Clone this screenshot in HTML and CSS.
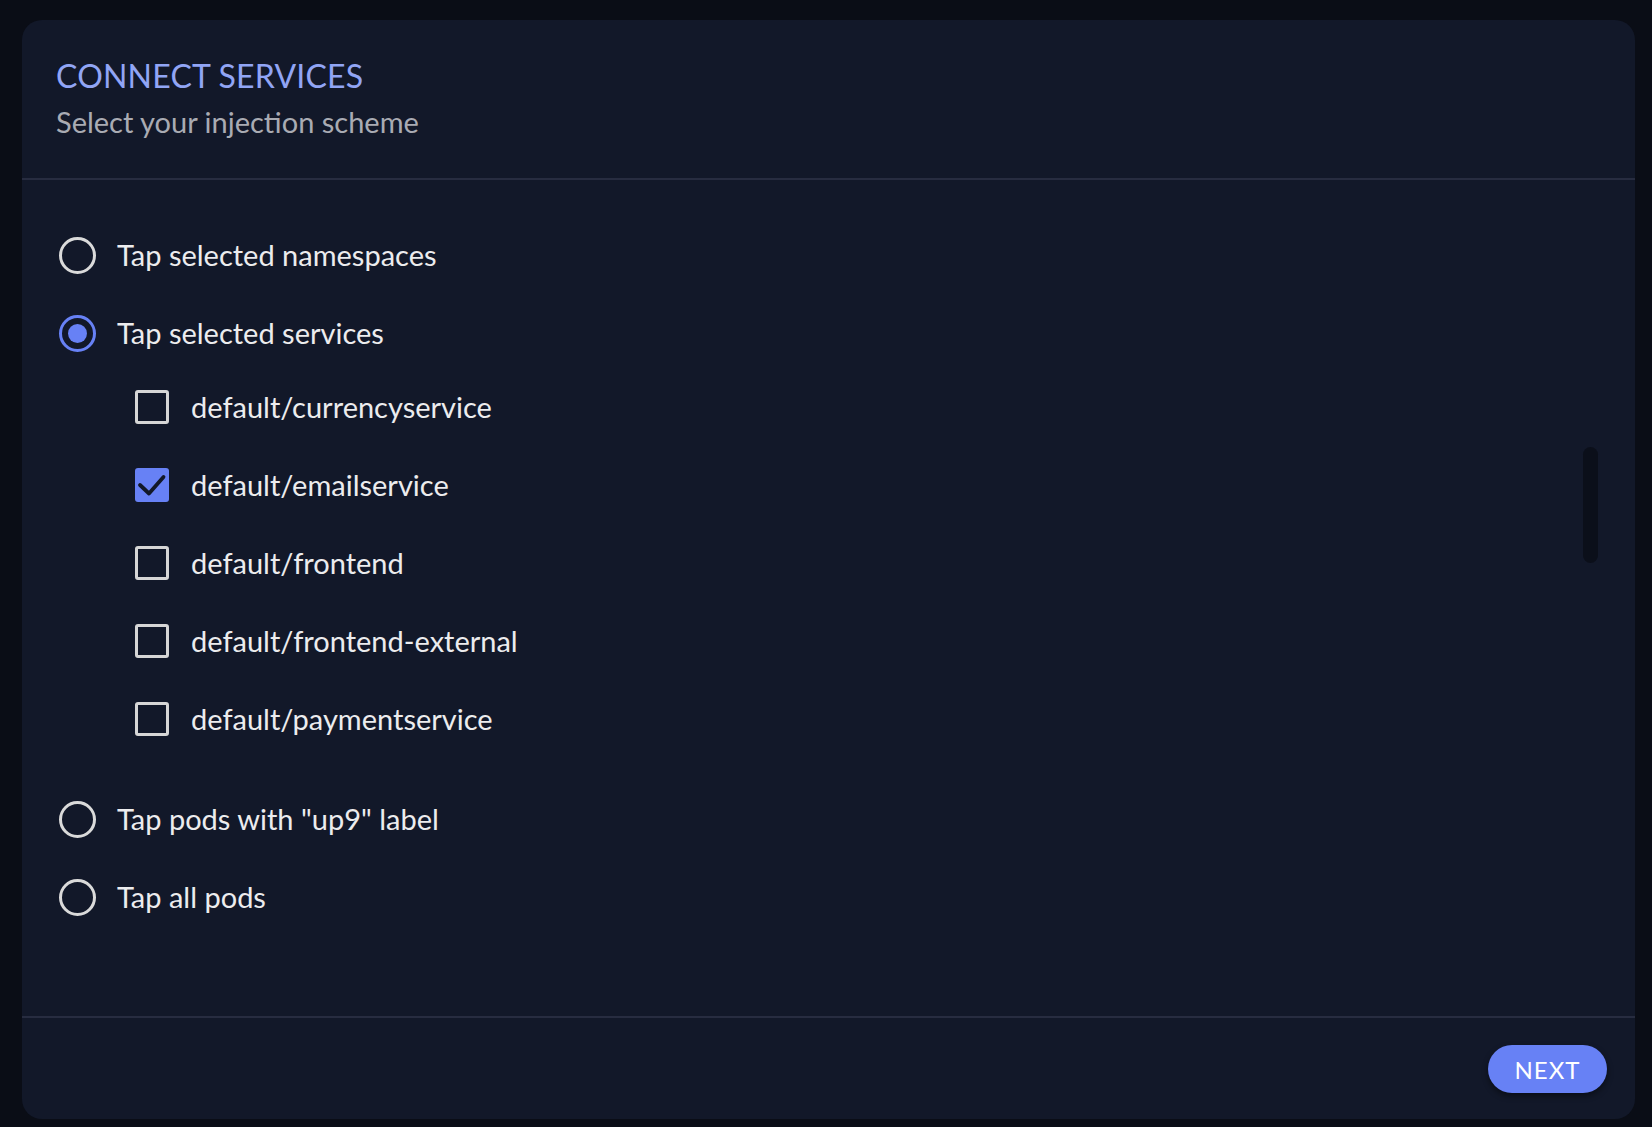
FILE: index.html
```html
<!DOCTYPE html>
<html lang="en">
<head>
<meta charset="utf-8">
<title>Connect Services</title>
<link rel="stylesheet" href="styles.css">
</head>
<body>
<div class="card">
  <header class="card-header">
    <h1 class="title">CONNECT SERVICES</h1>
    <p class="subtitle">Select your injection scheme</p>
  </header>
  <main class="card-body">
    <div class="option"><span class="radio"></span><span class="label">Tap selected namespaces</span></div>
    <div class="option"><span class="radio checked"></span><span class="label">Tap selected services</span></div>
    <div class="services">
      <div class="service"><span class="checkbox"></span><span class="label">default/currencyservice</span></div>
      <div class="service"><span class="checkbox checked"><svg viewBox="0 0 34 34" width="34" height="34"><path d="M5 17l9 8.5L28.5 9" fill="none" stroke="#121829" stroke-width="3.8" stroke-linecap="round" stroke-linejoin="round"/></svg></span><span class="label">default/emailservice</span></div>
      <div class="service"><span class="checkbox"></span><span class="label">default/frontend</span></div>
      <div class="service"><span class="checkbox"></span><span class="label">default/frontend-external</span></div>
      <div class="service"><span class="checkbox"></span><span class="label">default/paymentservice</span></div>
    </div>
    <div class="option"><span class="radio"></span><span class="label">Tap pods with "up9" label</span></div>
    <div class="option"><span class="radio"></span><span class="label">Tap all pods</span></div>
    <div class="scrollbar"></div>
  </main>
  <footer class="card-footer">
    <button class="next">NEXT</button>
  </footer>
</div>
</body>
</html>
```
FILE: styles.css
```css
* { box-sizing: border-box; }
html, body { margin: 0; padding: 0; }
body {
  background: #0a0d16;
  font-family: Lato, "Noto Sans", sans-serif;
  color: #ececee;
  width: 1652px;
  height: 1127px;
  overflow: hidden;
}
.card {
  margin: 20px 17px 0 22px;
  height: 1099px;
  background: #121829;
  border-radius: 20px;
  display: flex;
  flex-direction: column;
}
.card-header {
  height: 160px;
  padding: 36px 34px 0 34px;
  border-bottom: 2px solid #272c40;
}
.title {
  margin: 0;
  font-weight: 400;
  font-size: 32px;
  line-height: 40px;
  color: #91a5f5;
  letter-spacing: 0.2px;
}
.subtitle {
  margin: 8px 0 0 0;
  font-size: 29px;
  line-height: 36px;
  color: #a9abb3;
}
.card-body {
  flex: 1;
  position: relative;
  padding: 36px 34px 0 35px;
}
.option {
  display: flex;
  align-items: center;
  height: 78px;
}
.label {
  font-size: 29px;
  line-height: 36px;
}
.radio {
  width: 37px;
  height: 37px;
  border: 3.4px solid #dadada;
  border-radius: 50%;
  margin-left: 2px;
  margin-right: 21px;
  flex: none;
  position: relative;
}
.radio.checked { border-color: #6781f5; }
.radio.checked::after {
  content: "";
  position: absolute;
  left: 50%;
  top: 50%;
  width: 19px;
  height: 19px;
  margin: -9.5px 0 0 -9.5px;
  border-radius: 50%;
  background: #6781f5;
}
.services {
  margin: -4px 0 22px 0;
}
.service {
  display: flex;
  align-items: center;
  height: 78px;
  padding-left: 78px;
}
.checkbox {
  width: 34px;
  height: 34px;
  border: 3.2px solid #d6d6d6;
  border-radius: 3px;
  margin-right: 22px;
  flex: none;
  display: flex;
  align-items: center;
  justify-content: center;
  position: relative;
}
.checkbox.checked {
  background: #6781f5;
  border: none;
}
.scrollbar {
  position: absolute;
  right: 37px;
  top: 267px;
  width: 15px;
  height: 116px;
  border-radius: 8px;
  background: #0b0f1a;
}
.card-footer {
  height: 103px;
  border-top: 2px solid #272c40;
  display: flex;
  justify-content: flex-end;
  align-items: flex-start;
  padding: 27px 28px 0 0;
}
.next {
  width: 119px;
  height: 48px;
  border: none;
  border-radius: 24px;
  background: #6781f5;
  color: #ffffff;
  font-family: Lato, "Noto Sans", sans-serif;
  font-weight: 400;
  font-size: 24px;
  letter-spacing: 1px;
  box-shadow: 0 3px 6px rgba(0, 0, 0, 0.45);
  padding: 0;
}
```
